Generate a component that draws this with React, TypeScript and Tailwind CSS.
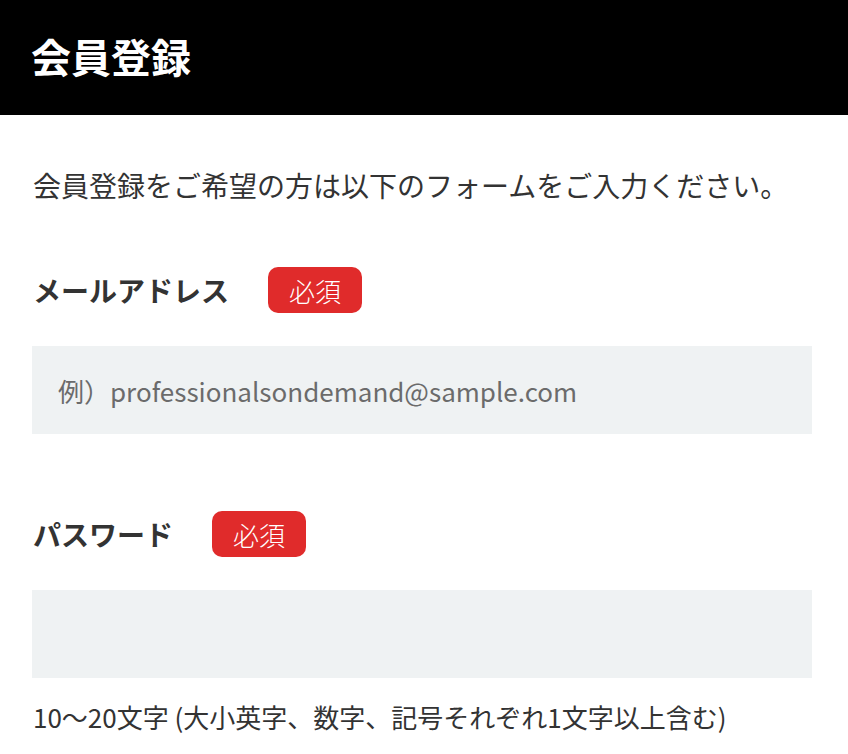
import React from 'react';

const font = { fontFamily: '"Noto Sans CJK JP", "Noto Sans", sans-serif' };

const Required: React.FC = () => (
  <span className="inline-flex h-[46px] items-center rounded-[10px] bg-[#e02b2b] px-[21px] text-[26px] font-light text-white">
    必須
  </span>
);

export default function App() {
  return (
    <div className="min-h-[754px] bg-white text-[#333]" style={font}>
      <header className="flex h-[115px] items-center bg-black px-[31px] pb-[4px]">
        <h1 className="text-[40px] font-bold leading-none text-white">会員登録</h1>
      </header>

      <div className="pl-[32px] pr-[36px] pt-[52px]">
        <p className="pl-px text-[28px] leading-[36px]">
          会員登録をご希望の方は以下のフォームをご入力ください。
        </p>

        <div className="mt-[64px] flex items-center gap-[39px] pl-px">
          <span className="text-[28px] font-bold">メールアドレス</span>
          <Required />
        </div>
        <input
          type="email"
          placeholder="例）professionalsondemand@sample.com"
          className="mt-[33px] block h-[88px] w-full bg-[#eff2f3] px-[26px] text-[26px] text-[#333] outline-none placeholder:text-[#6b6b6b]"
        />

        <div className="mt-[77px] flex items-center gap-[39px] pl-px">
          <span className="text-[28px] font-bold">パスワード</span>
          <Required />
        </div>
        <input
          type="password"
          className="mt-[33px] block h-[88px] w-full bg-[#eff2f3] px-[26px] text-[26px] text-[#333] outline-none"
        />
        <p className="mt-[22px] pl-px text-[26px] leading-[34px]">
          10〜20文字 (大小英字、数字、記号それぞれ1文字以上含む)
        </p>
      </div>
    </div>
  );
}
